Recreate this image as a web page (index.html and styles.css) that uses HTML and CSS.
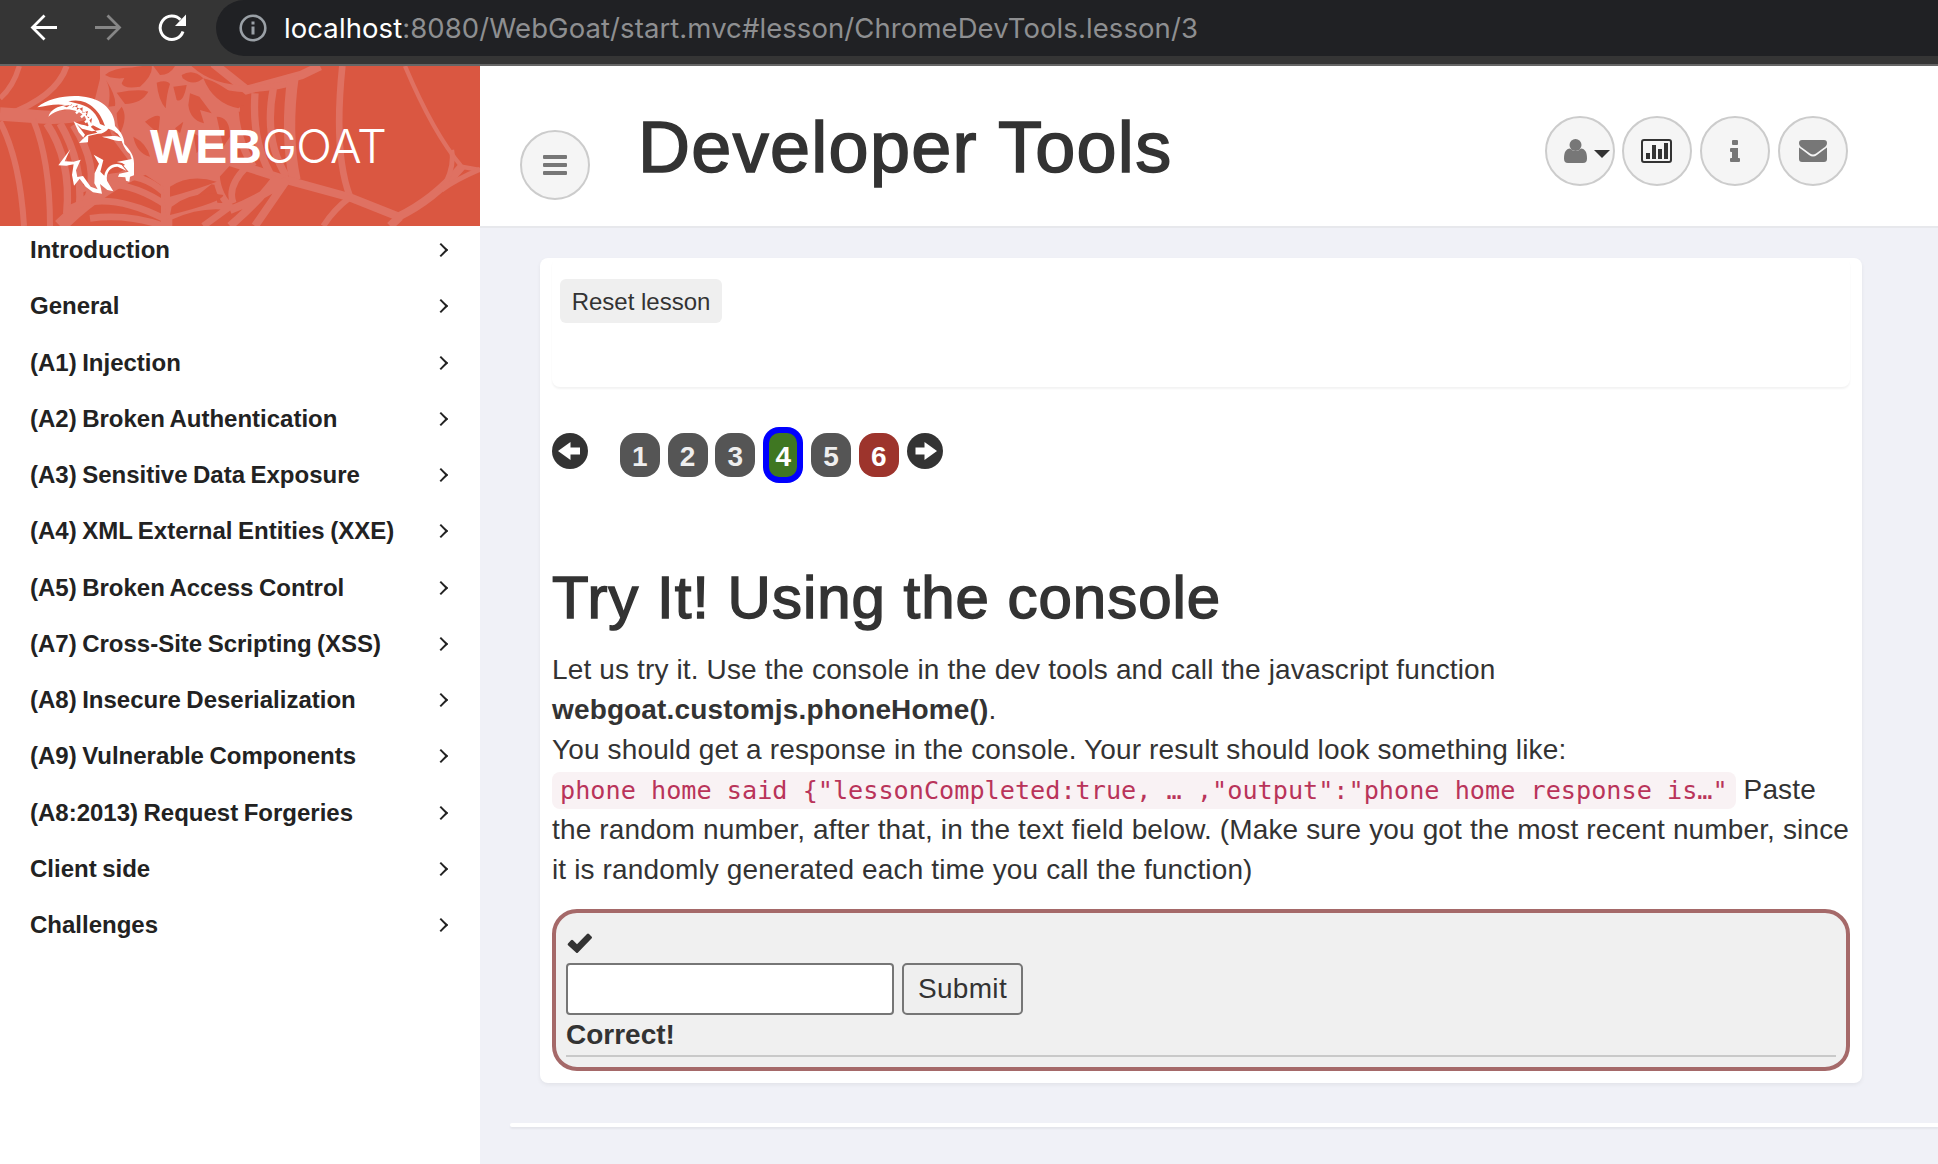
FILE: index.html
```html
<!DOCTYPE html>
<html lang="en">
<head>
<meta charset="utf-8">
<title>WebGoat</title>
<link rel="stylesheet" href="styles.css">
</head>
<body>
<div class="browser">
  <svg class="nav-icons" width="216" height="64" viewBox="0 0 216 64" fill="none" stroke-width="2.8">
    <path d="M57 27.5H33M44.500 15.500L32.500 27.500L44.500 39.500" stroke="#fff"/>
    <path d="M95 27.500H119M107.500 15.500L119.500 27.500L107.500 39.500" stroke="#868686"/>
    <path d="M183 31.500A11.700 11.700 0 1 1 180.500 19.800" stroke="#fff" stroke-width="3"/>
    <path d="M186 14.500V26H175Z" fill="#fff"/>
  </svg>
  <div class="omnibox">
    <svg width="28" height="28" viewBox="0 0 28 28"><circle cx="14" cy="14" r="12.300" fill="none" stroke="#9aa0a6" stroke-width="2.600"/><path d="M12.500 12.500h3v8h-3zM12.500 7.500h3v3h-3z" fill="#9aa0a6"/></svg>
    <div class="url"><span class="host">localhost</span><span class="path">:8080/WebGoat/start.mvc#lesson/ChromeDevTools.lesson/3</span></div>
  </div>
</div>
<div class="app">
  <aside class="sidebar">
    <div class="brand">
      <svg class="web" width="480" height="160" viewBox="0 198 1440 480">
        <g fill="none" stroke="#df7162" stroke-width="15">
          <path d="M58 198Q40 260 0 295" stroke-width="16"/>
          <path d="M200 198Q170 290 20 345" stroke-width="18"/>
          <path d="M0 342Q60 345 110 350Q230 360 300 320L330 198" stroke-width="40"/>
          <path d="M0 365Q60 480 72 678M100 360Q150 480 150 678" stroke-width="18"/>
          <path d="M140 370Q215 480 200 640M180 370Q250 490 238 625M220 375Q300 500 262 600" stroke-width="22"/>
          <path d="M180 678Q300 560 440 500" stroke-width="42"/>
          <path d="M640 190L740 270L905 225L960 198" stroke-width="26"/>
          <path d="M560 198Q660 300 870 250M520 200Q620 320 720 325" stroke-width="20"/>
          <path d="M705 300Q700 400 760 500M765 280Q755 420 810 520M820 265Q790 420 860 530" stroke-width="22"/>
          <path d="M880 225Q855 400 885 540" stroke-width="34"/>
          <path d="M1027 198Q1000 460 1050 590" stroke-width="20"/>
          <path d="M1215 198Q1300 400 1385 500L1440 510" stroke-width="13"/>
          <path d="M640 470L860 540L1050 592L1195 650" stroke-width="25"/>
          <path d="M1195 650Q1300 600 1385 500M1170 678L1200 650" stroke-width="25"/>
          <path d="M1355 450Q1365 505 1325 570Q1365 540 1440 508" stroke-width="15"/>
          <path d="M1050 592Q1000 630 970 678" stroke-width="18"/>
          <path d="M500 640L650 600M690 630Q770 600 860 540L765 678M690 678Q790 590 830 530" stroke-width="24"/>
          <path d="M210 625Q320 570 490 655M240 570Q360 520 505 620M270 655Q380 640 490 678M300 540Q420 500 505 590" stroke-width="20"/>
          <path d="M500 480L500 678" stroke-width="34"/>
          <path d="M510 570Q580 530 650 545M510 650Q600 610 680 620M650 480Q640 570 690 620L610 678M740 500Q680 560 700 610" stroke-width="20"/>
        </g>
        <path fill="#df7162" d="M300 198H560L650 270L705 315V480L650 540L500 660L490 560L400 500L340 420L300 300Z"/>
        <g fill="#da5741">
          <path d="M315 225Q350 195 430 205Q390 245 330 232ZM388 205Q430 195 455 198Q460 225 420 260Q370 268 365 250ZM350 278Q420 265 445 275Q425 310 375 312ZM318 240Q350 290 345 318L325 320Q335 270 318 240Z"/>
          <path d="M470 248Q500 238 510 252Q500 280 497 325Q475 300 470 248ZM520 260L560 255Q550 310 530 300ZM570 280L598 290L635 340L600 330L612 370Q570 360 565 315ZM460 198H525Q510 225 480 225ZM545 225Q580 205 610 235Q580 260 548 235Z"/>
          <path d="M435 365Q470 340 480 350L475 400Q450 380 435 365ZM525 385L550 365L540 400ZM580 400L620 420L590 460ZM365 320Q385 350 360 400Q350 370 350 340ZM400 410Q440 430 450 470Q410 460 400 410ZM460 410Q485 450 475 475Z"/>
          <path d="M610 235Q660 245 735 312L715 325Q640 310 610 235ZM650 350Q690 350 690 410L670 440ZM510 560Q570 520 650 545Q600 565 510 590ZM515 620Q580 570 670 585Q670 605 510 645Z"/>
        </g>
      </svg>
      <svg class="goat" width="480" height="160" viewBox="0 198 1440 480" fill="#fff">
        <path d="M112 322C150 290 220 282 268 293C315 303 345 340 345 378C365 398 372 412 373 432C390 450 402 466 402 490L402 526L390 530L388 545L378 542L376 532L354 530L358 521L386 515L370 497L385 490L396 480L390 462C375 450 370 436 365 423C350 424 325 415 306 410C330 410 345 405 358 410C350 396 338 388 325 386C318 395 306 402 294 401L265 408L264 427L237 429L251 414L236 397L221 364C240 377 253 372 268 382L255 350C228 322 178 320 145 350C153 326 175 320 195 315C165 310 140 318 112 322Z"/>
        <path fill="#da5741" d="M205 304C260 290 300 330 315 378L300 372C293 345 270 320 240 313ZM190 318Q230 306 262 350L276 374L305 389L276 394L246 386L230 372L255 404L247 418L262 405L292 398L272 380L276 355L260 349L264 333L247 338L248 322L230 330L233 314L215 325L217 312L200 322ZM336 395L353 401L363 415Z"/>
        <path fill="none" stroke="#fff" stroke-width="7" d="M228 340L240 328M243 352L258 338M255 367L273 352M264 382L284 368M211 326L220 314"/>
        <path d="M211 448L175 496L199 497L221 493L216 525L222 557L239 536L257 560L279 577L306 581L300 552L322 570L340 574L321 542C317 516 333 499 353 500L379 512L365 495C342 485 317 500 313 527L301 515L310 480L281 464L297 491L284 520L283 550L293 568L272 560L249 528L232 531L228 511L242 479L221 485L194 484Z"/>
        <path d="M350 486L380 480L399 476L396 491L379 497L366 489Z"/>
      </svg>
      <div class="wordmark"><b>WEB</b><span>GOAT</span></div>
    </div>
    <nav class="menu">
      <a><span>Introduction</span><i></i></a>
      <a><span>General</span><i></i></a>
      <a><span>(A1) Injection</span><i></i></a>
      <a><span>(A2) Broken Authentication</span><i></i></a>
      <a><span>(A3) Sensitive Data Exposure</span><i></i></a>
      <a><span>(A4) XML External Entities (XXE)</span><i></i></a>
      <a><span>(A5) Broken Access Control</span><i></i></a>
      <a><span>(A7) Cross-Site Scripting (XSS)</span><i></i></a>
      <a><span>(A8) Insecure Deserialization</span><i></i></a>
      <a><span>(A9) Vulnerable Components</span><i></i></a>
      <a><span>(A8:2013) Request Forgeries</span><i></i></a>
      <a><span>Client side</span><i></i></a>
      <a><span>Challenges</span><i></i></a>
    </nav>
  </aside>
  <div class="main">
    <header class="topbar">
      <button class="round toggle"><svg width="24" height="20" viewBox="0 0 24 20" fill="#777"><rect width="24" height="4" rx="1"/><rect y="8" width="24" height="4" rx="1"/><rect y="16" width="24" height="4" rx="1"/></svg></button>
      <h1>Developer Tools</h1>
      <div class="tools">
        <button class="round user"><svg width="66" height="66" viewBox="0 0 66 66"><g fill="#777"><path d="M23 30.500C19 31 17 34 17 40.500Q17 45 21 45H36Q40 45 40 40.500C40 34 38 31 34 30.500Q28.500 35.500 23 30.500Z"/><circle cx="28.500" cy="27" r="6"/></g><path fill="#333" d="M47 32h16l-8 8z"/></svg></button>
        <button class="round"><svg width="32" height="24" viewBox="0 0 32 24"><rect x="1" y="1" width="29" height="22" rx="2" fill="none" stroke="#333" stroke-width="2"/><path fill="#333" d="M5 14h4v6H5zM11 6h4v14h-4zM17 10h4v10h-4zM23 4h4v16h-4z"/></svg></button>
        <button class="round"><svg width="10" height="22" viewBox="0 0 10 22" fill="#777"><rect x="2" width="6" height="5" rx="1"/><path d="M0 9Q0 8 1 8H8V18H9Q10 18 10 19V21Q10 22 9 22H1Q0 22 0 21V19Q0 18 1 18H2V12H1Q0 12 0 11Z"/></svg></button>
        <button class="round"><svg width="28" height="22" viewBox="0 0 28 22" fill="#777"><path d="M3 0H25Q28 0 28 3Q28 6 24.500 8L17 13.500Q14 15.500 11 13.500L3.500 8Q0 6 0 3Q0 0 3 0Z"/><path d="M0 7.500Q5 11 10 15Q14 18 18 15Q23 11 28 7.500V19Q28 22 25 22H3Q0 22 0 19Z"/></svg></button>
      </div>
    </header>
    <section class="card">
      <div class="reset"><button>Reset lesson</button></div>
      <div class="pages">
        <svg class="arrow prev" width="36" height="36" viewBox="0 0 36 36"><circle cx="18" cy="18" r="18" fill="#333"/><path fill="#fff" d="M6 18L18.500 9V14.500H28V21.500H18.500V27Z"/></svg>
        <span>1</span><span>2</span><span>3</span><span class="current">4</span><span>5</span><span class="todo">6</span>
        <svg class="arrow" width="36" height="36" viewBox="0 0 36 36"><circle cx="18" cy="18" r="18" fill="#333"/><path fill="#fff" d="M30 18L17.500 9V14.500H8.500V21.500H17.500V27Z"/></svg>
      </div>
      <h2>Try It! Using the console</h2>
      <p>Let us try it. Use the console in the dev tools and call the javascript function<br>
      <b>webgoat.customjs.phoneHome()</b>.<br>
      You should get a response in the console. Your result should look something like:<br>
      <code>phone home said {"lessonCompleted:true, … ,"output":"phone home response is…"</code> Paste<br>
      the random number, after that, in the text field below. (Make sure you got the most recent number, since<br>
      it is randomly generated each time you call the function)</p>
      <div class="attack">
        <svg class="check" width="26" height="20" viewBox="0 0 26 20"><path fill="#333" d="M1 10.500L4 7.200Q5 6.500 6 7.200L10 11.200L20 1Q21 0 22 1L24.500 3.500Q25.500 4.500 24.500 5.500L11 19.500Q10 20.500 9 19.500L1 12.200Q.3 11.300 1 10.500Z"/></svg>
        <div class="fields"><input type="text"><button>Submit</button></div>
        <div class="feedback">Correct!</div>
      </div>
    </section>
    <div class="footer-line"></div>
  </div>
</div>
</body>
</html>
```
FILE: styles.css
```css
* { box-sizing: border-box; }
body {
  margin: 0;
  height: 1164px;
  overflow: hidden;
  background: #f0f1f7;
  color: #333;
  font-family: "Liberation Sans", Arial, sans-serif;
  font-size: 28px;
}
button { font-family: inherit; color: #333; padding: 0; }

.browser { display: flex; height: 66px; background: #353535; border-bottom: 2px solid #666; }
.nav-icons { flex: none; }
.omnibox {
  flex: 1;
  display: flex;
  align-items: center;
  gap: 17px;
  height: 56px;
  padding-left: 23px;
  background: #202124;
  border-radius: 28px 0 0 28px;
}
.url { font: 27.5px/56px Inter, sans-serif; color: #8e8f91; white-space: nowrap; letter-spacing: .08px; }
.host { color: #fff; }

.app { display: flex; height: 1098px; }
.sidebar { width: 480px; flex: none; background: #fff; }
.brand { position: relative; display: flex; height: 160px; padding-left: 150px; background: #da5741; overflow: hidden; }
.web, .goat { position: absolute; left: 0; top: 0; }
.wordmark { position: relative; color: #fff; font-size: 48px; line-height: 160px; white-space: nowrap; }
.wordmark span { font-family: Inter, sans-serif; font-weight: 300; font-size: 47px; letter-spacing: -.6px; }
.menu { padding: 4px 30px 0; }
.menu a {
  display: flex;
  justify-content: space-between;
  align-items: center;
  height: 40px;
  margin-bottom: 16.25px;
  font-size: 24px;
  font-weight: bold;
  color: #222;
  word-spacing: -1.2px;
  white-space: nowrap;
}
.menu i { width: 10px; height: 10px; margin-right: 4px; border: solid #222; border-width: 2px 2px 0 0; transform: rotate(45deg); }

.main { flex: 1; min-width: 0; }
.topbar {
  display: flex;
  align-items: flex-start;
  height: 162px;
  padding: 0 90px 0 40px;
  background: #fff;
  border-bottom: 2px solid #e7e8ec;
}
.round {
  display: flex;
  align-items: center;
  justify-content: center;
  width: 70px;
  height: 70px;
  flex: none;
  background: #f5f5f5;
  border: 2px solid #ccc;
  border-radius: 50%;
}
.toggle { margin-top: 64px; }
h1, h2 { margin: 0; font-weight: normal; white-space: nowrap; }
h1 { margin: 41px 0 0 48px; font-size: 72px; line-height: 80px; letter-spacing: 1.3px; -webkit-text-stroke: 1.6px #333; }
.tools { display: flex; gap: 8px; margin: 50px 0 0 auto; }
.user { margin-right: -1px; }

.card {
  width: 1322px;
  height: 825px;
  margin: 30px 0 0 60px;
  padding: 0 12px;
  background: #fff;
  border-radius: 8px;
  box-shadow: 0 2px 4px rgba(0, 0, 0, .06);
}
.reset { height: 129px; padding: 21px 8px; border-radius: 8px; box-shadow: 0 2px 2px rgba(0, 0, 0, .05); }
.reset button { width: 162px; height: 44px; padding-top: 1px; border: 0; border-radius: 6px; background: #efefef; font-size: 24px; }
.pages { display: flex; gap: 7.8px; margin-top: 46px; height: 44px; }
.pages span {
  width: 40px;
  height: 44px;
  border-radius: 16px;
  background: #555;
  color: #eee;
  text-align: center;
  font-size: 28px;
  font-weight: bold;
  line-height: 48px;
}
.arrow { flex: none; }
.prev { margin-right: 24px; }
.pages .current { position: relative; width: 28px; margin: 0 6px; border-radius: 10px; background: #3f7722; color: #fff; box-shadow: 0 0 0 6px #00f; }
.pages .todo { background: #9d342c; color: #fff; }
h2 { margin-top: 88px; font-size: 60px; line-height: 66px; letter-spacing: .98px; -webkit-text-stroke: 1.5px #333; }
p { margin: 19px 0 0; line-height: 40px; letter-spacing: .14px; white-space: nowrap; }
code { padding: 4px 8px; border-radius: 8px; background: #f9f2f4; color: #b9345a; font: 25.2px/36px "DejaVu Sans Mono", monospace; letter-spacing: 0; }
.attack { height: 162px; margin-top: 19px; padding: 20px 10px 0; border: 4px solid #a56969; border-radius: 25px; background: #f0f0f0; }
.check { display: block; margin-left: 1px; }
.fields { display: flex; gap: 8px; margin-top: 10px; }
.fields input { width: 328px; height: 52px; border: 2px solid #767676; border-radius: 4px; background: #fff; }
.fields button { width: 121px; height: 52px; border: 2px solid #767676; border-radius: 5px; background: #efefef; font-size: 28px; letter-spacing: .3px; }
.feedback { height: 42px; border-bottom: 2px solid #c9c9c9; font-weight: bold; line-height: 40px; }
.footer-line { height: 4px; margin: 40px 0 0 30px; border-radius: 4px 0 0 4px; background: #fff; box-shadow: 0 2px 2px rgba(0, 0, 0, .05); }
```
